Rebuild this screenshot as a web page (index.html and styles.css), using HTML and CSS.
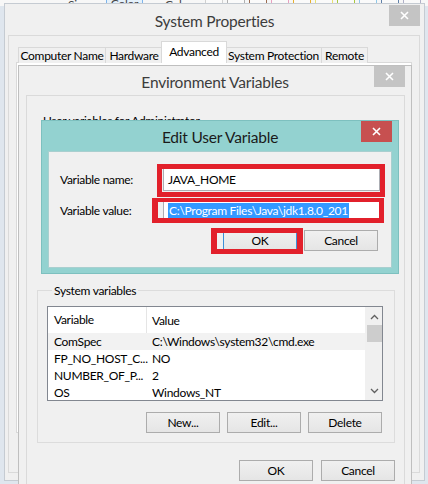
FILE: index.html
```html
<!DOCTYPE html>
<html lang="en">
<head>
<meta charset="utf-8">
<title>Environment Variables</title>
<link rel="stylesheet" href="styles.css">
</head>
<body>
  <!-- window further back: only its lower edge peeks out at the top -->
  <div class="backwin">
    <span class="bw-size">Size</span>
    <span class="bw-tab bw-tab-on">Color</span>
    <span class="bw-tab">Color</span>
    <span class="swatches">
      <i class="sw" style="border-color:#d0d0d0"></i>
      <i class="sw" style="border-color:#b0b0b0"></i>
      <i class="sw" style="border-color:#9a6b50"></i>
      <i class="sw" style="border-color:#e8a0c0"></i>
      <i class="sw" style="border-color:#e8b030"></i>
      <i class="sw" style="border-color:#e8e070"></i>
      <i class="sw" style="border-color:#a8c840"></i>
      <i class="sw" style="border-color:#90c8e8"></i>
      <i class="sw" style="border-color:#6080a8"></i>
      <i class="sw" style="border-color:#b0b0c8"></i>
    </span>
  </div>

  <!-- System Properties -->
  <div class="win sysprops">
    <div class="titlebar"><span class="title">System Properties</span></div>
    <button class="close close-idle" aria-label="Close">
      <svg width="9" height="9" viewBox="0 0 9 9"><path d="M1 1L8 8M8 1L1 8" stroke="#fff" stroke-width="1.6"/></svg>
    </button>
    <div class="client sp-client">
      <div class="tabs">
        <span class="tab t-cn">Computer Name</span>
        <span class="tab t-hw">Hardware</span>
        <span class="tab t-adv active">Advanced</span>
        <span class="tab t-sp">System Protection</span>
        <span class="tab t-rm">Remote</span>
      </div>
      <div class="tabpage"></div>
    </div>
  </div>

  <!-- Environment Variables -->
  <div class="win envvars">
    <div class="titlebar"><span class="title">Environment Variables</span></div>
    <button class="close close-idle env-close" aria-label="Close">
      <svg width="9" height="9" viewBox="0 0 9 9"><path d="M1 1L8 8M8 1L1 8" stroke="#fff" stroke-width="1.6"/></svg>
    </button>
    <div class="client env-client">
      <div class="user-label">User variables for Administrator</div>
      <div class="user-box"></div>

      <fieldset class="group">
        <legend>System variables</legend>
        <div class="list">
          <div class="list-body">
            <div class="lv-row lv-head"><span class="c1">Variable</span><span class="c2">Value</span></div>
            <div class="lv-row sel"><span class="c1">ComSpec</span><span class="c2">C:\Windows\system32\cmd.exe</span></div>
            <div class="lv-row"><span class="c1">FP_NO_HOST_C...</span><span class="c2">NO</span></div>
            <div class="lv-row"><span class="c1">NUMBER_OF_P...</span><span class="c2">2</span></div>
            <div class="lv-row"><span class="c1">OS</span><span class="c2">Windows_NT</span></div>
          </div>
          <div class="vscroll">
            <svg class="arr" width="9" height="6" viewBox="0 0 9 6"><path d="M1 5L4.5 1.5L8 5" fill="none" stroke="#606060" stroke-width="1.3"/></svg>
            <div class="thumb"></div>
            <div class="track"></div>
            <svg class="arr" width="9" height="6" viewBox="0 0 9 6"><path d="M1 1L4.5 4.5L8 1" fill="none" stroke="#606060" stroke-width="1.3"/></svg>
          </div>
        </div>
        <div class="btnrow">
          <button class="btn">New...</button>
          <button class="btn">Edit...</button>
          <button class="btn">Delete</button>
        </div>
      </fieldset>

      <div class="btnrow dlg-btns">
        <button class="btn">OK</button>
        <button class="btn">Cancel</button>
      </div>
    </div>
  </div>

  <!-- Edit User Variable (active dialog) -->
  <div class="win editvar">
    <div class="titlebar"><span class="title">Edit User Variable</span></div>
    <button class="close close-red" aria-label="Close">
      <svg width="9" height="9" viewBox="0 0 9 9"><path d="M1 1L8 8M8 1L1 8" stroke="#fff" stroke-width="1.6"/></svg>
    </button>
    <div class="client ev-client">
      <div class="field">
        <label>Variable name:</label>
        <span class="mark mark-name"><span class="input">JAVA_HOME</span></span>
      </div>
      <div class="field">
        <label>Variable value:</label>
        <span class="mark mark-value"><span class="input"><span class="selected">C:\Program Files\Java\jdk1.8.0_201</span></span></span>
      </div>
      <div class="btnrow ev-btns">
        <span class="mark mark-ok"><button class="btn default">OK</button></span>
        <button class="btn">Cancel</button>
      </div>
    </div>
  </div>
</body>
</html>
```

FILE: styles.css
```css
* { box-sizing: border-box; }

html, body {
  margin: 0;
  width: 428px;
  height: 484px;
  overflow: hidden;
}

body {
  position: relative;
  background: #dfe6ee;
  font-family: Lato, "Noto Sans", sans-serif;
  font-size: 12px;
  letter-spacing: -0.3px;
  color: #000;
}

/* ---------- background window strip ---------- */
.backwin {
  position: absolute;
  left: 0;
  top: 0;
  width: 428px;
  height: 6px;
  background: #f7f7f7;
  overflow: hidden;
  display: flex;
  align-items: flex-end;
  white-space: nowrap;
}
.bw-size {
  margin-left: 68px;
  line-height: 14px;
  margin-bottom: -6px;
  color: #444;
}
.bw-tab {
  margin-left: 18px;
  line-height: 14px;
  margin-bottom: -6px;
  padding: 0 4px;
  color: #444;
}
.bw-tab-on {
  border: 1px solid #7eb4ea;
  background: #e5f1fb;
  margin-left: 18px;
}
.swatches {
  display: flex;
  gap: 4px;
  margin-left: 9px;
  align-self: flex-end;
  margin-bottom: 1px;
}
.sw {
  display: block;
  width: 18px;
  height: 10px;
  border: 1px solid;
  border-top: 0;
  background: #fafafa;
}

/* ---------- generic windows ---------- */
.win {
  position: absolute;
  border: 1px solid #c5cbd2;
  background: #f0f0f0;
}
.titlebar {
  display: flex;
  justify-content: center;
  align-items: center;
}
.title {
  font-size: 15.5px;
  letter-spacing: -0.2px;
  color: #3c3c3c;
}
.close {
  position: absolute;
  top: 0;
  border: 0;
  padding: 0;
  width: 31px;
  height: 21px;
  display: flex;
  align-items: center;
  justify-content: center;
}
.close-idle { background: #c4c4c4; }
.close-red { background: #c75050; }

.client {
  border: 1px solid #dadada;
  background: #f0f0f0;
}

/* ---------- System Properties ---------- */
.sysprops {
  left: 4px;
  top: 3px;
  width: 421px;
  height: 478px;
}
.sysprops .titlebar { height: 31px; padding-top: 2px; }
.sysprops .close { right: 4px; top: 1px; }
.sp-client {
  margin-left: 3px;
  width: 412px;
  height: 438px;
  padding: 6px 0 0 7px;
}
.tabs {
  display: flex;
  align-items: flex-end;
  height: 21px;
  margin-left: 2px;
  position: relative;
  z-index: 1;
  margin-bottom: -1px;
}
.tab {
  height: 16px;
  border: 1px solid #d9d9d9;
  border-bottom: 0;
  margin-right: -1px;
  background: #f0f0f0;
  text-align: center;
  line-height: 15px;
  white-space: nowrap;
}
.tab.active {
  height: 22px;
  background: #fff;
  line-height: 20px;
  position: relative;
  z-index: 2;
  margin-left: -1px;
  margin-right: -2px;
}
.t-cn { width: 88px; }
.t-hw { width: 58px; }
.t-adv { width: 66px; }
.t-sp { width: 97px; }
.t-rm { width: 47px; }
.tabpage {
  width: 396px;
  height: 371px;
  border: 1px solid #d9d9d9;
  background: #fff;
}

/* ---------- Environment Variables ---------- */
.envvars {
  left: 18px;
  top: 65px;
  width: 394px;
  height: 440px;
  border-color: #bfbfbf;
}
.envvars .titlebar { height: 29px; padding-top: 2px; }
.env-close { right: 6px; top: 0; height: 21px; }
.env-client {
  margin-left: 7px;
  width: 379px;
  height: 420px;
  padding-top: 17px;
}
.user-label {
  margin-left: 16px;
  line-height: 16px;
}
.user-box {
  margin: 0 10px 0 10px;
  height: 154px;
}

.group {
  margin: 0 0 0 10px;
  width: 358px;
  height: 160px;
  border: 1px solid #dcdcdc;
  padding: 8px 11px 0 9px;
  min-width: 0;
}
.group legend {
  padding: 0 2px;
  margin-left: 5px;
  line-height: 15px;
}

.list {
  display: flex;
  width: 336px;
  height: 95px;
  border: 1px solid #828790;
  background: #fff;
}
.list-body {
  flex: 1;
  overflow: hidden;
}
.lv-row {
  display: flex;
  height: 17px;
  align-items: center;
  white-space: nowrap;
}
.lv-head {
  height: 26px;
  position: relative;
}
.lv-head .c1 { border-right: 1px solid #e5e5e5; height: 26px; line-height: 26px; }
.lv-row.sel { background: #f2f2f2; }
.c1 { width: 99px; padding-left: 6px; flex: none; }
.c2 { padding-left: 5px; }

.vscroll {
  width: 17px;
  flex: none;
  background: #f0f0f0;
  border-left: 1px solid #f0f0f0;
  display: flex;
  flex-direction: column;
  align-items: center;
}
.vscroll .arr { margin: 7px 0 5px; flex: none; }
.vscroll .arr:last-child { margin: 5px 0 6px; }
.thumb {
  width: 15px;
  height: 17px;
  background: #cdcdcd;
  flex: none;
}
.track { flex: 1; }

.btnrow {
  display: flex;
  gap: 8px;
}
.group .btnrow {
  margin: 11px 0 0 99px;
  gap: 7px;
}
.btn {
  font: inherit;
  letter-spacing: inherit;
  color: #000;
  width: 74px;
  height: 21px;
  padding: 0;
  border: 1px solid #acacac;
  background: linear-gradient(#f0f0f0, #e5e5e5);
  line-height: 17px;
}
.dlg-btns {
  margin: 17px 0 0 212px;
  gap: 8px;
}

/* ---------- Edit User Variable ---------- */
.editvar {
  left: 41px;
  top: 120px;
  width: 358px;
  height: 154px;
  background: #93d2d0;
  border-color: #7dc0bf;
}
.editvar .titlebar { height: 30px; padding-top: 1px; }
.editvar .title { color: #1a1a1a; }
.editvar .close { right: 6px; top: 0; }
.ev-client {
  margin-left: 6px;
  width: 344px;
  height: 117px;
  border-color: #a9cfcf;
  padding: 16px 0 0 11px;
}
.field {
  display: flex;
  align-items: center;
  height: 23px;
  margin-bottom: 8px;
}
.field label {
  width: 103px;
  flex: none;
}
.input {
  display: flex;
  align-items: center;
  width: 217px;
  height: 23px;
  border: 1px solid #abadb3;
  background: #fff;
  padding-left: 4px;
  white-space: nowrap;
}
.selected {
  background: #3399ff;
  color: #fff;
  line-height: 15px;
  padding: 0 1px;
}

/* red highlight frames drawn over the controls */
.mark { position: relative; display: inline-flex; }
.mark::after {
  content: "";
  position: absolute;
  border: 5px solid #e2202b;
  pointer-events: none;
}
.mark-name::after { left: -6px; right: -5px; top: -4px; bottom: -6px; }
.mark-value::after { left: -11px; right: -4px; top: -1px; bottom: -1px; border-width: 4px 5px 5px 6px; }
.mark-ok::after { left: -12px; right: -6px; top: -2px; bottom: -3px; border-width: 5px 6px 5px 6px; }

.ev-btns {
  margin: 3px 0 0 163px;
  gap: 7px;
  align-items: center;
}
.btn.default { border-color: #3c8fd8; }
```
